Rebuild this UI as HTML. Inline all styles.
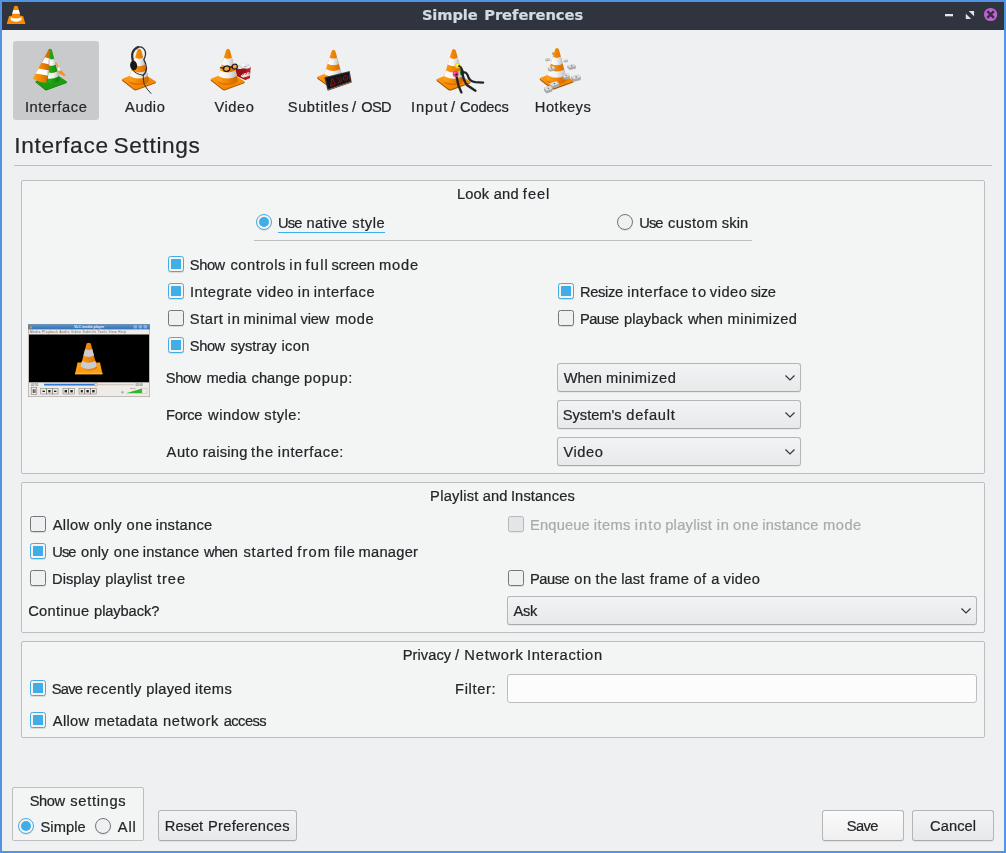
<!DOCTYPE html>
<html lang="en"><head><meta charset="utf-8"><title>Simple Preferences</title>
<style>
html,body{margin:0;padding:0;}
body{width:1006px;height:853px;position:relative;overflow:hidden;background:#5294e2;font-family:'Liberation Sans',sans-serif;font-size:14.67px;color:#232629;}
div,span,svg{position:absolute;box-sizing:border-box;}
.t{white-space:pre;height:30px;line-height:30px;-webkit-text-stroke:.22px currentColor;}
#tx{left:0;top:0;width:1006px;height:853px;will-change:transform;}
#tb{left:2px;top:2px;width:1002px;height:28px;background:#2f343f;}
#ct{left:2px;top:30px;width:1002px;height:821px;background:#eff0f1;}
#sel{left:13px;top:41px;width:86px;height:79px;background:#c9cacc;border-radius:3px;}
.hl{height:1px;background:#bcbec0;}
.gb{border:1px solid #bcbebf;border-radius:2px;background:#f3f4f4;}
.cb{width:16px;height:16px;border:1px solid #747678;border-radius:2.5px;background:#eff0f1;box-shadow:0 1px 0 rgba(0,0,0,.10);}
.cb.on{border-color:#3daee9;background:#fbf0ea;}
.cb.on::after{content:"";position:absolute;left:2px;top:2px;width:10px;height:10px;background:#3daee9;border-radius:.5px;}
.cb.dis{border-color:#b7b9ba;background:#e4e5e6;box-shadow:0 1px 0 rgba(0,0,0,.05);}
.rb{width:16px;height:16px;border:1px solid #747678;border-radius:50%;background:#eff0f1;box-shadow:0 1px 0 rgba(0,0,0,.08);}
.rb.on{border-color:#3daee9;background:#fbf0ea;}
.rb.on::after{content:"";position:absolute;left:2px;top:2px;width:10px;height:10px;background:#3daee9;border-radius:50%;}
.btn{border:1px solid #b3b5b7;border-bottom-color:#a8aaac;border-radius:3px;background:linear-gradient(#f2f3f4,#e8e9ea);box-shadow:0 1px 0 rgba(0,0,0,.05);}
.btn.def{background:linear-gradient(#fbfbfb,#efeff0);}
.inp{border:1px solid #bcbebf;border-radius:3px;background:#fcfcfc;}

</style></head>
<body>
<div id="tb"></div>
<div id="ct"></div>
<div id="sel"></div>
<div class="hl" style="left:14px;top:165px;width:978px"></div>

<div class="gb" style="left:21px;top:180px;width:964px;height:294px"></div>
<div class="hl" style="left:254px;top:240px;width:498px"></div>
<div class="rb on" style="left:256px;top:214px"></div>
<div style="left:278px;top:232px;width:107px;height:1px;background:#3daee9"></div>
<div class="rb" style="left:617px;top:214px"></div>
<div class="cb on" style="left:168px;top:256px"></div>
<div class="cb on" style="left:168px;top:283px"></div>
<div class="cb" style="left:168px;top:310px"></div>
<div class="cb on" style="left:168px;top:337px"></div>
<div class="cb on" style="left:558px;top:283px"></div>
<div class="cb" style="left:558px;top:310px"></div>
<div class="btn" style="left:557px;top:363px;width:244px;height:29px"></div>
<div class="btn" style="left:557px;top:400px;width:244px;height:29px"></div>
<div class="btn" style="left:557px;top:437px;width:244px;height:29px"></div>
<svg class="chev" style="left:783px;top:372px" width="14" height="12" viewBox="0 0 14 12"><path d="M2.5 3.5 L7 8 L11.5 3.5" fill="none" stroke="#31363b" stroke-width="1.2"/></svg>
<svg class="chev" style="left:783px;top:409px" width="14" height="12" viewBox="0 0 14 12"><path d="M2.5 3.5 L7 8 L11.5 3.5" fill="none" stroke="#31363b" stroke-width="1.2"/></svg>
<svg class="chev" style="left:783px;top:446px" width="14" height="12" viewBox="0 0 14 12"><path d="M2.5 3.5 L7 8 L11.5 3.5" fill="none" stroke="#31363b" stroke-width="1.2"/></svg>

<div class="gb" style="left:21px;top:482px;width:964px;height:151px"></div>
<div class="cb" style="left:30px;top:516px"></div>
<div class="cb on" style="left:30px;top:543px"></div>
<div class="cb" style="left:30px;top:570px"></div>
<div class="cb dis" style="left:508px;top:516px"></div>
<div class="cb" style="left:508px;top:570px"></div>
<div class="btn" style="left:507px;top:596px;width:470px;height:29px"></div>
<svg class="chev" style="left:959px;top:605px" width="14" height="12" viewBox="0 0 14 12"><path d="M2.5 3.5 L7 8 L11.5 3.5" fill="none" stroke="#31363b" stroke-width="1.2"/></svg>

<div class="gb" style="left:21px;top:641px;width:964px;height:97px"></div>
<div class="cb on" style="left:30px;top:680px"></div>
<div class="cb on" style="left:30px;top:712px"></div>
<div class="inp" style="left:507px;top:674px;width:470px;height:29px"></div>

<div class="gb" style="left:12px;top:787px;width:132px;height:54px"></div>
<div class="rb on" style="left:18px;top:818px"></div>
<div class="rb" style="left:95px;top:818px"></div>
<div class="btn" style="left:158px;top:810px;width:139px;height:31px"></div>
<div class="btn def" style="left:822px;top:810px;width:82px;height:31px"></div>
<div class="btn" style="left:912px;top:810px;width:82px;height:31px"></div>
<!-- title bar icons -->
<svg style="left:0;top:0" width="40" height="40" viewBox="0 0 853 853">
<path d="M300 140 Q340 105 382 140 L432 335 L492 340 L542 512 L143 512 L193 340 L252 335 Z" fill="#ff8a00"/>
<path d="M282 212 L402 212 L424 292 L260 292 Z" fill="#ffffff"/>
<path d="M235 368 Q340 425 450 368 Q466 398 458 425 Q340 500 228 425 Q220 398 235 368 Z" fill="#ffffff"/>
</svg>
<svg style="left:936px;top:2px" width="70" height="28" viewBox="0 0 70 28">
<rect x="9" y="12" width="8" height="2.3" fill="#e6e8ef"/>
<path d="M32.7 8.9 H38.1 V14.3 Z M29.8 11.8 V17 H35.1 Z" fill="#e1e4eb"/>
<circle cx="54.6" cy="12.5" r="6.6" fill="#c061d2"/>
<path d="M51.3 9.2 L57.9 15.8 M57.9 9.2 L51.3 15.8" stroke="#2f343f" stroke-width="2.4" fill="none"/>
</svg>
<!-- preview thumbnail -->
<svg style="left:28px;top:324px" width="122" height="73" viewBox="0 0 122 73">
<defs><linearGradient id="ptb" x1="0" y1="0" x2="0" y2="1"><stop offset="0" stop-color="#5b9ad8"/><stop offset="1" stop-color="#2f70b8"/></linearGradient>
<linearGradient id="pco" x1="0" y1="0" x2="1" y2="0"><stop offset="0" stop-color="#ff9a1a"/><stop offset="1" stop-color="#e07000"/></linearGradient></defs>
<rect x="0" y="0" width="122" height="73" fill="#efebe7"/>
<rect x="0" y="0" width="122" height="5.4" fill="url(#ptb)"/>
<path d="M1.6 4.6 L3 1.2 L4.4 4.6 Z" fill="#ff8a00"/>
<text x="61" y="4.1" font-size="3.6" font-weight="700" fill="#e8eef7" text-anchor="middle" font-family="'Liberation Sans',sans-serif">VLC media player</text>
<rect x="105.5" y="1" width="3.6" height="3.4" rx="1" fill="#7fb0e2"/><rect x="110.5" y="1" width="3.6" height="3.4" rx="1" fill="#7fb0e2"/><rect x="115.5" y="1" width="3.6" height="3.4" rx="1" fill="#7fb0e2"/>
<text x="2" y="9" font-size="3.1" fill="#5a5a5a" font-family="'Liberation Sans',sans-serif" textLength="96" lengthAdjust="spacing">Media Playback Audio Video Subtitle Tools View Help</text>
<rect x="1" y="10.5" width="120" height="47.8" fill="#000"/>
<path d="M47.2 47.5 L50 37.5 L58 37.5 L62 18.6 Q60.8 17.6 59.6 18.6 L55.3 37.5 L50 37.5 Z" fill="none"/>
<path d="M47 50.2 L49.5 38.5 L72 38.5 L74.5 50.2 Z" fill="#ff9d10"/>
<path d="M47 50.2 L74.5 50.2 L74.3 48.6 L47.3 48.6 Z" fill="#ffb030"/>
<path d="M58.6 19.6 Q60.7 17.8 62.8 19.6 L69.2 44 Q60.7 49.5 52.2 44 Z" fill="url(#pco)"/>
<path d="M57.2 25 Q60.7 27 64.2 25 L66 31.6 Q60.7 34.4 55.4 31.6 Z" fill="#c9ced3"/>
<path d="M54 37 Q60.7 40.6 67.4 37 L68.8 42.6 Q60.7 47.6 52.6 42.6 Z" fill="#c9ced3"/>
<text x="3" y="61.7" font-size="2.8" fill="#333" font-family="'Liberation Sans',sans-serif">01:55</text>
<text x="107.5" y="61.7" font-size="2.8" fill="#333" font-family="'Liberation Sans',sans-serif">03:06</text>
<rect x="16" y="60" width="90" height="1.3" rx=".6" fill="#cfcac4"/>
<rect x="16" y="59.8" width="52" height="1.6" rx=".6" fill="#2f7bd6"/>
<circle cx="68" cy="60.6" r="1.5" fill="#e8e4df" stroke="#8d8a86" stroke-width=".4"/>
<g fill="none" stroke="#6d6a66" stroke-width=".5">
<rect x="3.2" y="63.5" width="5.6" height="7.2"/>
<rect x="12.8" y="64.6" width="5.6" height="5.4"/><rect x="18.6" y="64.6" width="5.6" height="5.4"/><rect x="24.4" y="64.6" width="5.6" height="5.4"/>
<rect x="35" y="64.6" width="5.6" height="5.4"/><rect x="40.8" y="64.6" width="5.6" height="5.4"/>
<rect x="51" y="64.6" width="5.6" height="5.4"/><rect x="56.8" y="64.6" width="5.6" height="5.4"/><rect x="62.6" y="64.6" width="5.6" height="5.4"/>
</g>
<g fill="#222"><rect x="4.8" y="65.2" width=".9" height="3.8"/><rect x="6.5" y="65.2" width=".9" height="3.8"/>
<rect x="14.5" y="66.6" width="2.4" height="1.4"/><rect x="20.3" y="66" width="2.2" height="2.4"/><rect x="26" y="66.6" width="2.4" height="1.4"/>
<rect x="36.6" y="66" width="2.4" height="2.4"/><rect x="42.4" y="66" width="2.4" height="2.4"/>
<rect x="52.8" y="66" width="2" height="2.4"/><rect x="58.4" y="66" width="2.4" height="2.4"/><rect x="64.2" y="66" width="2.4" height="2.4"/></g>
<path d="M98 69.3 L114 64.4 L114 69.3 Z" fill="#2fb52f"/>
<rect x="114" y="64.2" width="5" height="5.3" fill="#efebe7" stroke="#b5b0aa" stroke-width=".4"/>
<circle cx="94.5" cy="68.2" r="1.3" fill="#9db4d8"/>
<text x="102" y="64.6" font-size="2.2" fill="#555" font-family="'Liberation Sans',sans-serif">100%</text>
<rect x=".25" y=".25" width="121.5" height="72.5" fill="none" stroke="#8c8a88" stroke-width=".5"/>
</svg>

<svg style="left:25px;top:40px" width="60" height="60" viewBox="0 0 853 853"><defs>
<linearGradient id="fo" x1="0" y1="0" x2="1" y2="0"><stop offset="0" stop-color="#ffa21f"/><stop offset=".4" stop-color="#f78a03"/><stop offset="1" stop-color="#cc6600"/></linearGradient>
<linearGradient id="fw" x1="0" y1="0" x2="1" y2="0"><stop offset="0" stop-color="#ffffff"/><stop offset=".5" stop-color="#f1f1f1"/><stop offset="1" stop-color="#bdbdbd"/></linearGradient>
<linearGradient id="fb" x1="0" y1="0" x2="1" y2="1"><stop offset="0" stop-color="#ff9a14"/><stop offset=".5" stop-color="#f88c04"/><stop offset="1" stop-color="#ee7f00"/></linearGradient>
<linearGradient id="fg" x1="0" y1="0" x2="1" y2="0"><stop offset="0" stop-color="#2fae1f"/><stop offset=".5" stop-color="#1f9a12"/><stop offset="1" stop-color="#0f7d08"/></linearGradient>
</defs><path d="M150 585 L150 600 L285 712 Q300 722 320 712 L590 612 Q600 606 598 595 L300 690 Z" fill="#0c6a06"/><path d="M160 578 Q143 588 160 600 L283 700 Q300 712 322 702 L585 603 Q603 595 585 583 L470 505 L250 510 Z" fill="#1f9d12"/><path d="M335 140 Q345 126 362 126 Q380 128 385 150 L480 520 Q500 570 478 588 Q430 618 340 615 L320 560 Z" fill="url(#fg)"/><path d="M345 268 Q385 290 418 262 L440 350 Q395 378 345 362 Z" fill="url(#fw)"/><path d="M335 462 Q400 480 462 445 L480 520 Q410 560 325 548 Z" fill="url(#fw)"/><path d="M338 132 Q350 128 356 135 L345 300 L335 440 L300 612 Q200 600 110 550 Z" fill="url(#fo)"/><path d="M285 245 L347 262 L342 345 L240 322 Z" fill="#ffffff"/><path d="M195 405 L336 432 L322 505 L150 478 Z" fill="#ffffff"/><path d="M347 262 L342 345 L325 342 L332 258 Z M336 432 L322 505 L305 502 L318 428 Z" fill="#d9d9d9"/><path d="M430 320 L450 325 L480 385 L462 395 Z" fill="#f39a1c"/><path d="M462 395 L480 385 L505 430 L478 440 Z" fill="#fafafa"/><path d="M470 440 L520 435 L580 505 L555 512 L500 480 L480 480 Z" fill="#f5901a"/></svg>
<svg style="left:115px;top:40px" width="60" height="60" viewBox="0 0 853 853"><defs>
<linearGradient id="ao" x1="0" y1="0" x2="1" y2="0"><stop offset="0" stop-color="#ffa21f"/><stop offset=".4" stop-color="#f78a03"/><stop offset="1" stop-color="#cc6600"/></linearGradient>
<linearGradient id="aw" x1="0" y1="0" x2="1" y2="0"><stop offset="0" stop-color="#ffffff"/><stop offset=".5" stop-color="#f1f1f1"/><stop offset="1" stop-color="#bdbdbd"/></linearGradient>
<linearGradient id="ab" x1="0" y1="0" x2="1" y2="1"><stop offset="0" stop-color="#ff9a14"/><stop offset=".5" stop-color="#f88c04"/><stop offset="1" stop-color="#ee7f00"/></linearGradient>
<linearGradient id="ag" x1="0" y1="0" x2="1" y2="0"><stop offset="0" stop-color="#2fae1f"/><stop offset=".5" stop-color="#1f9a12"/><stop offset="1" stop-color="#0f7d08"/></linearGradient>
</defs><path d="M100.0 555.0 L100.0 575.0 Q105.0 585.0 120.0 595.0 L270.0 712.0 Q290.0 722.0 315.0 712.0 L575.0 615.0 Q583.0 610.0 582.0 595.0 L285.0 690.0 Z" fill="#a85200"/><path d="M112.0 548.0 Q96.0 556.0 112.0 570.0 L268.0 692.0 Q288.0 706.0 315.0 696.0 L570.0 603.0 Q588.0 595.0 570.0 583.0 L440.0 500.0 L220.0 505.0 Z" fill="url(#ab)"/><path d="M190.0 560.0 Q200.0 640.0 340.0 640.0 Q480.0 635.0 490.0 565.0 Q480.0 600.0 340.0 605.0 Q205.0 605.0 190.0 560.0 Z" fill="#d97200"/><path d="M312.0 165.0 Q318.0 128.0 345.0 126.0 Q372.0 128.0 378.0 165.0 L472.0 525.0 Q490.0 570.0 470.0 585.0 Q420.0 618.0 340.0 620.0 Q255.0 618.0 208.0 588.0 Q185.0 570.0 204.0 525.0 Z" fill="url(#ao)"/><path d="M287.0 248.0 Q343.0 285.0 401.0 248.0 L428.0 350.0 Q340.0 395.0 258.0 348.0 Z" fill="url(#aw)"/><path d="M232.0 432.0 Q340.0 490.0 449.0 432.0 L470.0 512.0 Q340.0 585.0 209.0 512.0 Z" fill="url(#aw)"/><path d="M255 300 Q212 150 330 100" fill="none" stroke="#2a2c30" stroke-width="30" stroke-linecap="round"/><path d="M330 100 Q400 85 430 160 Q445 210 410 280 Q440 330 448 400 Q445 460 400 500" fill="none" stroke="#2a2c30" stroke-width="18" stroke-linecap="round"/><ellipse cx="265" cy="362" rx="50" ry="68" fill="#17181a" transform="rotate(-8 265 362)"/><path d="M250 425 Q300 490 400 500 Q405 580 415 630 Q450 700 512 760" fill="none" stroke="#2a2c30" stroke-width="14" stroke-linecap="round"/></svg>
<svg style="left:204px;top:40px" width="60" height="60" viewBox="0 0 853 853"><defs>
<linearGradient id="vo" x1="0" y1="0" x2="1" y2="0"><stop offset="0" stop-color="#ffa21f"/><stop offset=".4" stop-color="#f78a03"/><stop offset="1" stop-color="#cc6600"/></linearGradient>
<linearGradient id="vw" x1="0" y1="0" x2="1" y2="0"><stop offset="0" stop-color="#ffffff"/><stop offset=".5" stop-color="#f1f1f1"/><stop offset="1" stop-color="#bdbdbd"/></linearGradient>
<linearGradient id="vb" x1="0" y1="0" x2="1" y2="1"><stop offset="0" stop-color="#ff9a14"/><stop offset=".5" stop-color="#f88c04"/><stop offset="1" stop-color="#ee7f00"/></linearGradient>
<linearGradient id="vg" x1="0" y1="0" x2="1" y2="0"><stop offset="0" stop-color="#2fae1f"/><stop offset=".5" stop-color="#1f9a12"/><stop offset="1" stop-color="#0f7d08"/></linearGradient>
</defs><path d="M440 395 L660 380 L652 540 L585 568 L470 515 Z" fill="#9c1016"/><path d="M585 568 L652 540 L660 380 L612 392 Z" fill="#bf1b22"/><path d="M462 400 Q455 345 505 340 Q520 305 565 322 Q600 300 625 335 Q668 340 660 392 Q610 420 560 402 Q505 420 462 400 Z" fill="#e9ecf2"/><circle cx="505" cy="372" r="18" fill="#c9d3e6"/><circle cx="560" cy="350" r="17" fill="#fafbfd"/><circle cx="610" cy="368" r="18" fill="#d5dcea"/><circle cx="585" cy="380" r="10" fill="#b3823f"/><circle cx="535" cy="388" r="9" fill="#a9b6d0"/><circle cx="635" cy="352" r="9" fill="#b9c4dc"/><path d="M520 520 Q545 470 600 468 Q630 450 652 465 L650 505 Q600 525 560 535 Z" fill="#f1dcdc"/><path d="M548 500 L572 478 M590 495 L612 468 M628 488 L640 470" stroke="#9c1016" stroke-width="10"/><path d="M96.0 555.0 L96.0 575.0 Q101.0 585.0 116.0 595.0 L266.0 712.0 Q286.0 722.0 311.0 712.0 L571.0 615.0 Q579.0 610.0 578.0 595.0 L281.0 690.0 Z" fill="#a85200"/><path d="M108.0 548.0 Q92.0 556.0 108.0 570.0 L264.0 692.0 Q284.0 706.0 311.0 696.0 L566.0 603.0 Q584.0 595.0 566.0 583.0 L436.0 500.0 L216.0 505.0 Z" fill="url(#vb)"/><path d="M186.0 560.0 Q196.0 640.0 336.0 640.0 Q476.0 635.0 486.0 565.0 Q476.0 600.0 336.0 605.0 Q201.0 605.0 186.0 560.0 Z" fill="#d97200"/><path d="M308.0 165.0 Q314.0 128.0 341.0 126.0 Q368.0 128.0 374.0 165.0 L468.0 525.0 Q486.0 570.0 466.0 585.0 Q416.0 618.0 336.0 620.0 Q251.0 618.0 204.0 588.0 Q181.0 570.0 200.0 525.0 Z" fill="url(#vo)"/><path d="M283.0 248.0 Q339.0 285.0 397.0 248.0 L424.0 350.0 Q336.0 395.0 254.0 348.0 Z" fill="url(#vw)"/><path d="M228.0 432.0 Q336.0 490.0 445.0 432.0 L466.0 512.0 Q336.0 585.0 205.0 512.0 Z" fill="url(#vw)"/><ellipse cx="322" cy="408" rx="45" ry="38" fill="#ffa62b" stroke="#15161a" stroke-width="18" transform="rotate(-10 322 408)"/><ellipse cx="437" cy="378" rx="38" ry="34" fill="#ffa62b" stroke="#15161a" stroke-width="16" transform="rotate(-10 437 378)"/><path d="M232 395 L280 400 M365 392 L402 382" stroke="#15161a" stroke-width="16" fill="none" stroke-linecap="round"/></svg>
<svg style="left:309px;top:40px" width="60" height="60" viewBox="0 0 853 853"><defs>
<linearGradient id="so" x1="0" y1="0" x2="1" y2="0"><stop offset="0" stop-color="#ffa21f"/><stop offset=".4" stop-color="#f78a03"/><stop offset="1" stop-color="#cc6600"/></linearGradient>
<linearGradient id="sw" x1="0" y1="0" x2="1" y2="0"><stop offset="0" stop-color="#ffffff"/><stop offset=".5" stop-color="#f1f1f1"/><stop offset="1" stop-color="#bdbdbd"/></linearGradient>
<linearGradient id="sb" x1="0" y1="0" x2="1" y2="1"><stop offset="0" stop-color="#ff9a14"/><stop offset=".5" stop-color="#f88c04"/><stop offset="1" stop-color="#ee7f00"/></linearGradient>
<linearGradient id="sg" x1="0" y1="0" x2="1" y2="0"><stop offset="0" stop-color="#2fae1f"/><stop offset=".5" stop-color="#1f9a12"/><stop offset="1" stop-color="#0f7d08"/></linearGradient>
</defs><path d="M115.2 524.3 L115.2 542.3 Q120.0 551.3 134.2 560.3 L276.8 665.6 Q295.8 674.6 319.5 665.6 L566.5 578.3 Q574.1 573.8 573.1 560.3 L291.0 645.8 Z" fill="#a85200"/><path d="M126.7 518.0 Q111.5 525.2 126.7 537.8 L274.9 647.6 Q293.9 660.2 319.5 651.2 L561.8 567.5 Q578.9 560.3 561.8 549.5 L438.2 474.8 L229.2 479.3 Z" fill="url(#sb)"/><path d="M200.8 528.8 Q210.2 600.8 343.2 600.8 Q476.2 596.3 485.8 533.3 Q476.2 564.8 343.2 569.3 Q215.0 569.3 200.8 528.8 Z" fill="#d97200"/><path d="M316.6 173.3 Q322.4 140.0 348.0 138.2 Q373.6 140.0 379.4 173.3 L468.6 497.3 Q485.8 537.8 466.8 551.3 Q419.2 581.0 343.2 582.8 Q262.5 581.0 217.8 554.0 Q196.0 537.8 214.1 497.3 Z" fill="url(#so)"/><path d="M292.9 248.0 Q346.1 281.3 401.2 248.0 L426.9 339.8 Q343.2 380.3 265.4 338.0 Z" fill="url(#sw)"/><path d="M240.7 413.6 Q343.2 465.8 446.8 413.6 L466.8 485.6 Q343.2 551.3 218.8 485.6 Z" fill="url(#sw)"/><path d="M218 530 L578 440 L606 592 L262 712 Z" fill="#3b3d40"/><path d="M236 540 L568 458 L590 582 L272 692 Z" fill="#121415"/><path d="M262 712 L606 592 L608 604 L268 722 Z" fill="#6b4a1e"/><path d="M330 550 L305 655 L375 625 Z" fill="none" stroke="#b51119" stroke-width="12"/><path d="M395 535 L435 570 L410 625 M430 525 L470 560 L445 612" fill="none" stroke="#b51119" stroke-width="11"/><circle cx="520" cy="540" r="32" fill="none" stroke="#b51119" stroke-width="11"/><circle cx="520" cy="540" r="8" fill="#b51119"/><path d="M575 480 L582 560" stroke="#b51119" stroke-width="12"/></svg>
<svg style="left:429px;top:40px" width="60" height="60" viewBox="0 0 853 853"><defs>
<linearGradient id="io" x1="0" y1="0" x2="1" y2="0"><stop offset="0" stop-color="#ffa21f"/><stop offset=".4" stop-color="#f78a03"/><stop offset="1" stop-color="#cc6600"/></linearGradient>
<linearGradient id="iw" x1="0" y1="0" x2="1" y2="0"><stop offset="0" stop-color="#ffffff"/><stop offset=".5" stop-color="#f1f1f1"/><stop offset="1" stop-color="#bdbdbd"/></linearGradient>
<linearGradient id="ib" x1="0" y1="0" x2="1" y2="1"><stop offset="0" stop-color="#ff9a14"/><stop offset=".5" stop-color="#f88c04"/><stop offset="1" stop-color="#ee7f00"/></linearGradient>
<linearGradient id="ig" x1="0" y1="0" x2="1" y2="0"><stop offset="0" stop-color="#2fae1f"/><stop offset=".5" stop-color="#1f9a12"/><stop offset="1" stop-color="#0f7d08"/></linearGradient>
</defs><path d="M108.0 557.0 L108.0 577.0 Q113.0 587.0 128.0 597.0 L278.0 714.0 Q298.0 724.0 323.0 714.0 L583.0 617.0 Q591.0 612.0 590.0 597.0 L293.0 692.0 Z" fill="#a85200"/><path d="M120.0 550.0 Q104.0 558.0 120.0 572.0 L276.0 694.0 Q296.0 708.0 323.0 698.0 L578.0 605.0 Q596.0 597.0 578.0 585.0 L448.0 502.0 L228.0 507.0 Z" fill="url(#ib)"/><path d="M198.0 562.0 Q208.0 642.0 348.0 642.0 Q488.0 637.0 498.0 567.0 Q488.0 602.0 348.0 607.0 Q213.0 607.0 198.0 562.0 Z" fill="#d97200"/><path d="M320.0 167.0 Q326.0 130.0 353.0 128.0 Q380.0 130.0 386.0 167.0 L480.0 527.0 Q498.0 572.0 478.0 587.0 Q428.0 620.0 348.0 622.0 Q263.0 620.0 216.0 590.0 Q193.0 572.0 212.0 527.0 Z" fill="url(#io)"/><path d="M295.0 250.0 Q351.0 287.0 409.0 250.0 L436.0 352.0 Q348.0 397.0 266.0 350.0 Z" fill="url(#iw)"/><path d="M240.0 434.0 Q348.0 492.0 457.0 434.0 L478.0 514.0 Q348.0 587.0 217.0 514.0 Z" fill="url(#iw)"/><ellipse cx="468" cy="462" rx="28" ry="38" fill="#0d7a14"/><path d="M432 372 Q470 390 478 470 Q520 440 550 500 Q570 590 660 600 L770 605" fill="none" stroke="#222427" stroke-width="32" stroke-linecap="round"/><path d="M470 430 Q480 560 540 640 L660 720" fill="none" stroke="#222427" stroke-width="34" stroke-linecap="round"/><path d="M385 488 Q400 560 420 650 L460 745" fill="none" stroke="#222427" stroke-width="34" stroke-linecap="round"/><circle cx="408" cy="365" r="38" fill="#e8d80c"/><circle cx="402" cy="357" r="20" fill="#fff23a"/><circle cx="430" cy="372" r="14" fill="#111"/><circle cx="380" cy="482" r="42" fill="#e0357f"/><circle cx="372" cy="472" r="22" fill="#f55a9c"/><circle cx="388" cy="490" r="15" fill="#111"/></svg>
<svg style="left:532px;top:40px" width="60" height="60" viewBox="0 0 853 853"><defs>
<linearGradient id="ho" x1="0" y1="0" x2="1" y2="0"><stop offset="0" stop-color="#ffa21f"/><stop offset=".4" stop-color="#f78a03"/><stop offset="1" stop-color="#cc6600"/></linearGradient>
<linearGradient id="hw" x1="0" y1="0" x2="1" y2="0"><stop offset="0" stop-color="#ffffff"/><stop offset=".5" stop-color="#f1f1f1"/><stop offset="1" stop-color="#bdbdbd"/></linearGradient>
<linearGradient id="hb" x1="0" y1="0" x2="1" y2="1"><stop offset="0" stop-color="#ff9a14"/><stop offset=".5" stop-color="#f88c04"/><stop offset="1" stop-color="#ee7f00"/></linearGradient>
<linearGradient id="hg" x1="0" y1="0" x2="1" y2="0"><stop offset="0" stop-color="#2fae1f"/><stop offset=".5" stop-color="#1f9a12"/><stop offset="1" stop-color="#0f7d08"/></linearGradient>
</defs><path d="M110.0 543.0 L110.0 563.0 Q115.0 573.0 130.0 583.0 L280.0 700.0 Q300.0 710.0 325.0 700.0 L585.0 603.0 Q593.0 598.0 592.0 583.0 L295.0 678.0 Z" fill="#a85200"/><path d="M122.0 536.0 Q106.0 544.0 122.0 558.0 L278.0 680.0 Q298.0 694.0 325.0 684.0 L580.0 591.0 Q598.0 583.0 580.0 571.0 L450.0 488.0 L230.0 493.0 Z" fill="url(#hb)"/><path d="M200.0 548.0 Q210.0 628.0 350.0 628.0 Q490.0 623.0 500.0 553.0 Q490.0 588.0 350.0 593.0 Q215.0 593.0 200.0 548.0 Z" fill="#d97200"/><path d="M322.0 153.0 Q328.0 116.0 355.0 114.0 Q382.0 116.0 388.0 153.0 L482.0 513.0 Q500.0 558.0 480.0 573.0 Q430.0 606.0 350.0 608.0 Q265.0 606.0 218.0 576.0 Q195.0 558.0 214.0 513.0 Z" fill="url(#ho)"/><path d="M297.0 236.0 Q353.0 273.0 411.0 236.0 L438.0 338.0 Q350.0 383.0 268.0 336.0 Z" fill="url(#hw)"/><path d="M242.0 420.0 Q350.0 478.0 459.0 420.0 L480.0 500.0 Q350.0 573.0 219.0 500.0 Z" fill="url(#hw)"/><path d="M185 270.0 L241.25 255 L260 272.5 L258.5 292.5 L207.5 305 L186.5 287.5 Z" fill="#a9a9a9"/><path d="M185 270.0 L241.25 255 L260 272.5 L207.5 287.5 Z" fill="#dcdcdc"/><circle cx="224.0" cy="271.5" r="5.250000000000001" fill="#555"/><path d="M448 288.5 L496.75 275 L513 290.75 L511.7 308.75 L467.5 320 L449.3 304.25 Z" fill="#a9a9a9"/><path d="M448 288.5 L496.75 275 L513 290.75 L467.5 304.25 Z" fill="#dcdcdc"/><circle cx="481.8" cy="289.85" r="4.550000000000001" fill="#555"/><path d="M500 365.5 L593.75 340 L625 369.75 L622.5 403.75 L537.5 425 L502.5 395.25 Z" fill="#a9a9a9"/><path d="M500 365.5 L593.75 340 L625 369.75 L537.5 395.25 Z" fill="#dcdcdc"/><circle cx="565.0" cy="368.05" r="8.75" fill="#555"/><path d="M225 394.0 L303.75 370 L330 398.0 L327.9 430.0 L256.5 450 L227.1 422.0 Z" fill="#a9a9a9"/><path d="M225 394.0 L303.75 370 L330 398.0 L256.5 422.0 Z" fill="#dcdcdc"/><circle cx="279.6" cy="396.4" r="7.3500000000000005" fill="#555"/><path d="M428 502.0 L512.0 475 L540 506.5 L537.76 542.5 L461.6 565 L430.24 533.5 Z" fill="#a9a9a9"/><path d="M428 502.0 L512.0 475 L540 506.5 L461.6 533.5 Z" fill="#dcdcdc"/><circle cx="486.24" cy="504.7" r="7.840000000000001" fill="#555"/><path d="M555 521.5 L660.0 490 L695 526.75 L692.2 568.75 L597.0 595 L557.8 558.25 Z" fill="#a9a9a9"/><path d="M555 521.5 L660.0 490 L695 526.75 L597.0 558.25 Z" fill="#dcdcdc"/><circle cx="627.8" cy="524.65" r="9.8" fill="#555"/><path d="M245 616.5 L350.0 585 L385 621.75 L382.2 663.75 L287.0 690 L247.8 653.25 Z" fill="#a9a9a9"/><path d="M245 616.5 L350.0 585 L385 621.75 L287.0 653.25 Z" fill="#dcdcdc"/><circle cx="317.8" cy="619.65" r="9.8" fill="#555"/><path d="M170 683.0 L260.0 650 L290 688.5 L287.6 732.5 L206.0 760 L172.4 721.5 Z" fill="#a9a9a9"/><path d="M170 683.0 L260.0 650 L290 688.5 L206.0 721.5 Z" fill="#dcdcdc"/><circle cx="232.4" cy="686.3" r="8.4" fill="#555"/><rect x="285" y="178" width="28" height="30" fill="#8fa0b5"/></svg>
<div id="tx">
<span class="t" style="left:421.89px;top:-0.08px;letter-spacing:-0.092px;color:#d3dae3;font-weight:700;font-family:'DejaVu Sans', 'Liberation Sans', sans-serif;">Simple </span>
<span class="t" style="left:484.20px;top:-0.08px;letter-spacing:-0.019px;color:#d3dae3;font-weight:700;font-family:'DejaVu Sans', 'Liberation Sans', sans-serif;">Preferences</span>
<span class="t" style="left:24.93px;top:91.92px;letter-spacing:0.611px;">Interface</span>
<span class="t" style="left:125.09px;top:91.92px;letter-spacing:0.567px;">Audio</span>
<span class="t" style="left:214.57px;top:91.92px;letter-spacing:0.509px;">Video</span>
<span class="t" style="left:287.80px;top:91.92px;letter-spacing:0.570px;">Subtitles </span>
<span class="t" style="left:352.07px;top:91.92px;letter-spacing:0.000px;">/ </span>
<span class="t" style="left:361.22px;top:91.92px;letter-spacing:-0.694px;">OSD</span>
<span class="t" style="left:410.93px;top:91.92px;letter-spacing:0.975px;">Input </span>
<span class="t" style="left:451.07px;top:91.92px;letter-spacing:0.000px;">/ </span>
<span class="t" style="left:460.10px;top:91.92px;letter-spacing:-0.207px;">Codecs</span>
<span class="t" style="left:534.87px;top:91.92px;letter-spacing:0.487px;">Hotkeys</span>
<span class="t" style="left:14.13px;top:130.14px;letter-spacing:0.720px;font-size:22.67px;">Interface </span>
<span class="t" style="left:113.58px;top:130.14px;letter-spacing:0.624px;font-size:22.67px;">Settings</span>
<span class="t" style="left:457.12px;top:178.92px;letter-spacing:0.084px;">Look </span>
<span class="t" style="left:493.75px;top:178.92px;letter-spacing:0.184px;">and </span>
<span class="t" style="left:522.85px;top:178.92px;letter-spacing:0.967px;">feel</span>
<span class="t" style="left:278.06px;top:207.92px;letter-spacing:-0.831px;">Use </span>
<span class="t" style="left:306.59px;top:207.92px;letter-spacing:0.315px;">native </span>
<span class="t" style="left:352.30px;top:207.92px;letter-spacing:0.560px;">style</span>
<span class="t" style="left:639.29px;top:207.92px;letter-spacing:-0.948px;">Use </span>
<span class="t" style="left:667.95px;top:207.92px;letter-spacing:0.441px;">custom </span>
<span class="t" style="left:721.76px;top:207.92px;letter-spacing:0.138px;">skin</span>
<span class="t" style="left:189.85px;top:249.92px;letter-spacing:-0.443px;">Show </span>
<span class="t" style="left:230.54px;top:249.92px;letter-spacing:0.502px;">controls </span>
<span class="t" style="left:289.20px;top:249.92px;letter-spacing:1.250px;">in </span>
<span class="t" style="left:305.55px;top:249.92px;letter-spacing:1.181px;">full </span>
<span class="t" style="left:331.51px;top:249.92px;letter-spacing:-0.128px;">screen </span>
<span class="t" style="left:379.00px;top:249.92px;letter-spacing:0.870px;">mode</span>
<span class="t" style="left:189.95px;top:276.92px;letter-spacing:0.508px;">Integrate </span>
<span class="t" style="left:256.68px;top:276.92px;letter-spacing:0.432px;">video </span>
<span class="t" style="left:297.87px;top:276.92px;letter-spacing:0.744px;">in </span>
<span class="t" style="left:313.66px;top:276.92px;letter-spacing:0.601px;">interface</span>
<span class="t" style="left:189.85px;top:303.92px;letter-spacing:0.531px;">Start </span>
<span class="t" style="left:227.45px;top:303.92px;letter-spacing:0.987px;">in </span>
<span class="t" style="left:243.38px;top:303.92px;letter-spacing:0.422px;">minimal </span>
<span class="t" style="left:300.49px;top:303.92px;letter-spacing:-0.133px;">view </span>
<span class="t" style="left:335.38px;top:303.92px;letter-spacing:0.538px;">mode</span>
<span class="t" style="left:189.85px;top:330.92px;letter-spacing:-0.443px;">Show </span>
<span class="t" style="left:230.51px;top:330.92px;letter-spacing:-0.056px;">systray </span>
<span class="t" style="left:281.42px;top:330.92px;letter-spacing:0.389px;">icon</span>
<span class="t" style="left:580.09px;top:276.92px;letter-spacing:-0.368px;">Resize </span>
<span class="t" style="left:627.20px;top:276.92px;letter-spacing:0.581px;">interface </span>
<span class="t" style="left:692.00px;top:276.92px;letter-spacing:1.818px;">to </span>
<span class="t" style="left:709.85px;top:276.92px;letter-spacing:0.488px;">video </span>
<span class="t" style="left:750.76px;top:276.92px;letter-spacing:-0.319px;">size</span>
<span class="t" style="left:580.09px;top:303.92px;letter-spacing:-0.593px;">Pause </span>
<span class="t" style="left:623.96px;top:303.92px;letter-spacing:0.102px;">playback </span>
<span class="t" style="left:687.93px;top:303.92px;letter-spacing:-0.043px;">when </span>
<span class="t" style="left:727.60px;top:303.92px;letter-spacing:0.425px;">minimized</span>
<span class="t" style="left:165.85px;top:362.92px;letter-spacing:-0.443px;">Show </span>
<span class="t" style="left:206.38px;top:362.92px;letter-spacing:-0.002px;">media </span>
<span class="t" style="left:251.53px;top:362.92px;letter-spacing:0.051px;">change </span>
<span class="t" style="left:303.96px;top:362.92px;letter-spacing:0.709px;">popup:</span>
<span class="t" style="left:166.12px;top:399.92px;letter-spacing:-0.280px;">Force </span>
<span class="t" style="left:208.10px;top:399.92px;letter-spacing:0.473px;">window </span>
<span class="t" style="left:264.33px;top:399.92px;letter-spacing:0.475px;">style:</span>
<span class="t" style="left:166.53px;top:436.92px;letter-spacing:0.590px;">Auto </span>
<span class="t" style="left:202.64px;top:436.92px;letter-spacing:0.261px;">raising </span>
<span class="t" style="left:251.00px;top:436.92px;letter-spacing:0.937px;">the </span>
<span class="t" style="left:277.87px;top:436.92px;letter-spacing:0.589px;">interface:</span>
<span class="t" style="left:563.72px;top:362.92px;letter-spacing:-0.056px;">When </span>
<span class="t" style="left:605.98px;top:362.92px;letter-spacing:0.481px;">minimized</span>
<span class="t" style="left:562.85px;top:399.92px;letter-spacing:-0.039px;">System's </span>
<span class="t" style="left:626.23px;top:399.92px;letter-spacing:0.782px;">default</span>
<span class="t" style="left:563.57px;top:436.92px;letter-spacing:0.513px;">Video</span>
<span class="t" style="left:430.12px;top:480.92px;letter-spacing:0.254px;">Playlist </span>
<span class="t" style="left:482.75px;top:480.92px;letter-spacing:0.078px;">and </span>
<span class="t" style="left:510.92px;top:480.92px;letter-spacing:0.138px;">Instances</span>
<span class="t" style="left:52.65px;top:509.92px;letter-spacing:0.379px;">Allow </span>
<span class="t" style="left:93.78px;top:509.92px;letter-spacing:0.321px;">only </span>
<span class="t" style="left:126.58px;top:509.92px;letter-spacing:0.506px;">one </span>
<span class="t" style="left:155.65px;top:509.92px;letter-spacing:0.286px;">instance</span>
<span class="t" style="left:52.29px;top:536.92px;letter-spacing:-0.948px;">Use </span>
<span class="t" style="left:81.00px;top:536.92px;letter-spacing:0.249px;">only </span>
<span class="t" style="left:113.78px;top:536.92px;letter-spacing:0.412px;">one </span>
<span class="t" style="left:142.65px;top:536.92px;letter-spacing:0.260px;">instance </span>
<span class="t" style="left:203.93px;top:536.92px;letter-spacing:-0.316px;">when </span>
<span class="t" style="left:243.53px;top:536.92px;letter-spacing:0.773px;">started </span>
<span class="t" style="left:297.26px;top:536.92px;letter-spacing:1.143px;">from </span>
<span class="t" style="left:334.26px;top:536.92px;letter-spacing:0.624px;">file </span>
<span class="t" style="left:358.59px;top:536.92px;letter-spacing:0.255px;">manager</span>
<span class="t" style="left:52.12px;top:563.92px;letter-spacing:0.012px;">Display </span>
<span class="t" style="left:105.14px;top:563.92px;letter-spacing:0.283px;">playlist </span>
<span class="t" style="left:157.00px;top:563.92px;letter-spacing:0.935px;">tree</span>
<span class="t" style="left:530.12px;top:509.92px;letter-spacing:0.146px;color:#a8aaab;">Enqueue </span>
<span class="t" style="left:593.83px;top:509.92px;letter-spacing:0.381px;color:#a8aaab;">items </span>
<span class="t" style="left:634.87px;top:509.92px;letter-spacing:0.983px;color:#a8aaab;">into </span>
<span class="t" style="left:665.18px;top:509.92px;letter-spacing:0.279px;color:#a8aaab;">playlist </span>
<span class="t" style="left:716.87px;top:509.92px;letter-spacing:0.744px;color:#a8aaab;">in </span>
<span class="t" style="left:733.00px;top:509.92px;letter-spacing:0.610px;color:#a8aaab;">one </span>
<span class="t" style="left:762.20px;top:509.92px;letter-spacing:0.239px;color:#a8aaab;">instance </span>
<span class="t" style="left:823.00px;top:509.92px;letter-spacing:0.537px;color:#a8aaab;">mode</span>
<span class="t" style="left:530.09px;top:563.92px;letter-spacing:-0.494px;">Pause </span>
<span class="t" style="left:574.20px;top:563.92px;letter-spacing:0.731px;">on </span>
<span class="t" style="left:595.39px;top:563.92px;letter-spacing:0.755px;">the </span>
<span class="t" style="left:621.19px;top:563.92px;letter-spacing:0.108px;">last </span>
<span class="t" style="left:649.85px;top:563.92px;letter-spacing:0.387px;">frame </span>
<span class="t" style="left:693.60px;top:563.92px;letter-spacing:0.202px;">of </span>
<span class="t" style="left:711.17px;top:563.92px;letter-spacing:0.000px;">a </span>
<span class="t" style="left:723.49px;top:563.92px;letter-spacing:0.325px;">video</span>
<span class="t" style="left:28.13px;top:595.92px;letter-spacing:0.354px;">Continue </span>
<span class="t" style="left:94.09px;top:595.92px;letter-spacing:-0.099px;">playback?</span>
<span class="t" style="left:513.53px;top:595.92px;letter-spacing:-0.350px;">Ask</span>
<span class="t" style="left:402.70px;top:639.92px;letter-spacing:0.077px;">Privacy </span>
<span class="t" style="left:455.06px;top:639.92px;letter-spacing:0.000px;">/ </span>
<span class="t" style="left:464.34px;top:639.92px;letter-spacing:0.782px;">Network </span>
<span class="t" style="left:526.92px;top:639.92px;letter-spacing:0.671px;">Interaction</span>
<span class="t" style="left:51.85px;top:673.92px;letter-spacing:-0.799px;">Save </span>
<span class="t" style="left:86.64px;top:673.92px;letter-spacing:0.493px;">recently </span>
<span class="t" style="left:146.18px;top:673.92px;letter-spacing:0.315px;">played </span>
<span class="t" style="left:195.05px;top:673.92px;letter-spacing:0.421px;">items</span>
<span class="t" style="left:52.76px;top:705.92px;letter-spacing:0.350px;">Allow </span>
<span class="t" style="left:94.15px;top:705.92px;letter-spacing:0.331px;">metadata </span>
<span class="t" style="left:163.00px;top:705.92px;letter-spacing:0.685px;">network </span>
<span class="t" style="left:223.77px;top:705.92px;letter-spacing:-0.562px;">access</span>
<span class="t" style="left:455.12px;top:673.92px;letter-spacing:0.625px;">Filter:</span>
<span class="t" style="left:29.80px;top:785.92px;letter-spacing:-0.470px;">Show </span>
<span class="t" style="left:70.30px;top:785.92px;letter-spacing:0.681px;">settings</span>
<span class="t" style="left:40.45px;top:811.92px;letter-spacing:0.085px;">Simple</span>
<span class="t" style="left:117.76px;top:811.92px;letter-spacing:0.872px;">All</span>
<span class="t" style="left:164.85px;top:810.92px;letter-spacing:0.005px;">Reset </span>
<span class="t" style="left:208.09px;top:810.92px;letter-spacing:0.247px;">Preferences</span>
<span class="t" style="left:846.80px;top:810.92px;letter-spacing:-0.582px;">Save</span>
<span class="t" style="left:930.08px;top:810.92px;letter-spacing:0.059px;">Cancel</span>
</div>
</body></html>
